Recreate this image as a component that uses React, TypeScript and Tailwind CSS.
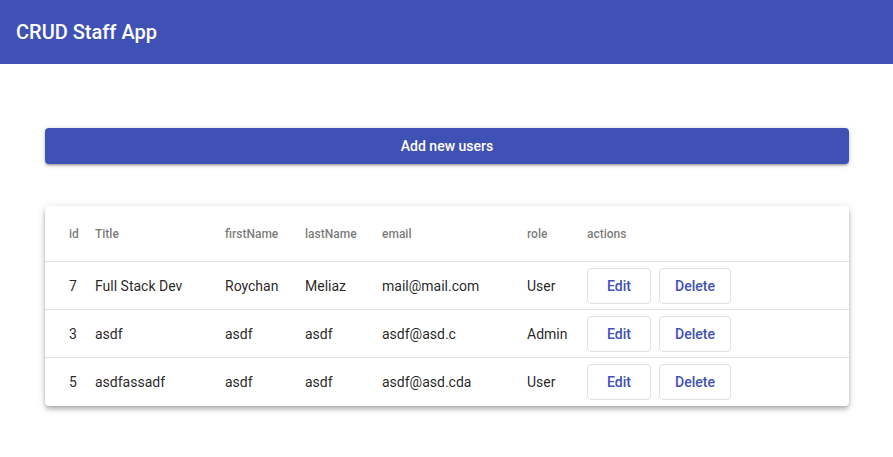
import React from 'react';

type User = {
  id: number;
  title: string;
  firstName: string;
  lastName: string;
  email: string;
  role: string;
};

const users: User[] = [
  { id: 7, title: 'Full Stack Dev', firstName: 'Roychan', lastName: 'Meliaz', email: 'mail@mail.com', role: 'User' },
  { id: 3, title: 'asdf', firstName: 'asdf', lastName: 'asdf', email: 'asdf@asd.c', role: 'Admin' },
  { id: 5, title: 'asdfassadf', firstName: 'asdf', lastName: 'asdf', email: 'asdf@asd.cda', role: 'User' },
];

const cols = 'grid grid-cols-[26px_130px_80px_77px_145px_60px_1fr] pl-6';

const App: React.FC = () => {
  return (
    <div className="min-h-screen bg-white" style={{ fontFamily: 'Roboto, "Liberation Sans", sans-serif' }}>
      <header className="h-16 bg-[#3f51b5] flex items-center px-4">
        <h1 className="text-white text-[20px] font-medium">CRUD Staff App</h1>
      </header>

      <main className="pl-[45px] pr-[44px] pt-16">
        <button className="w-full h-9 rounded bg-[#3f51b5] text-white text-sm font-medium shadow-[0px_1px_5px_0px_rgba(0,0,0,0.2),0px_2px_2px_0px_rgba(0,0,0,0.14),0px_3px_1px_-2px_rgba(0,0,0,0.12)]">
          Add new users
        </button>

        <div className="mt-[42px] bg-white rounded-sm shadow-[0px_2px_4px_-1px_rgba(0,0,0,0.2),0px_4px_5px_0px_rgba(0,0,0,0.14),0px_1px_10px_0px_rgba(0,0,0,0.12)]">
          <div className={`${cols} h-14 items-center border-b border-[#e0e0e0] text-xs font-medium text-black/55`}>
            <div>id</div>
            <div>Title</div>
            <div>firstName</div>
            <div>lastName</div>
            <div>email</div>
            <div>role</div>
            <div>actions</div>
          </div>
          {users.map((u, i) => (
            <div
              key={u.id}
              className={`${cols} h-12 items-center text-sm text-black/87 ${i < users.length - 1 ? 'border-b border-[#e0e0e0]' : ''}`}
            >
              <div>{u.id}</div>
              <div>{u.title}</div>
              <div>{u.firstName}</div>
              <div>{u.lastName}</div>
              <div>{u.email}</div>
              <div>{u.role}</div>
              <div className="flex gap-2">
                <button className="w-16 h-9 rounded border border-black/12 text-[#3f51b5] text-sm font-medium">Edit</button>
                <button className="w-[72px] h-9 rounded border border-black/12 text-[#3f51b5] text-sm font-medium">Delete</button>
              </div>
            </div>
          ))}
        </div>
      </main>
    </div>
  );
};

export default App;
